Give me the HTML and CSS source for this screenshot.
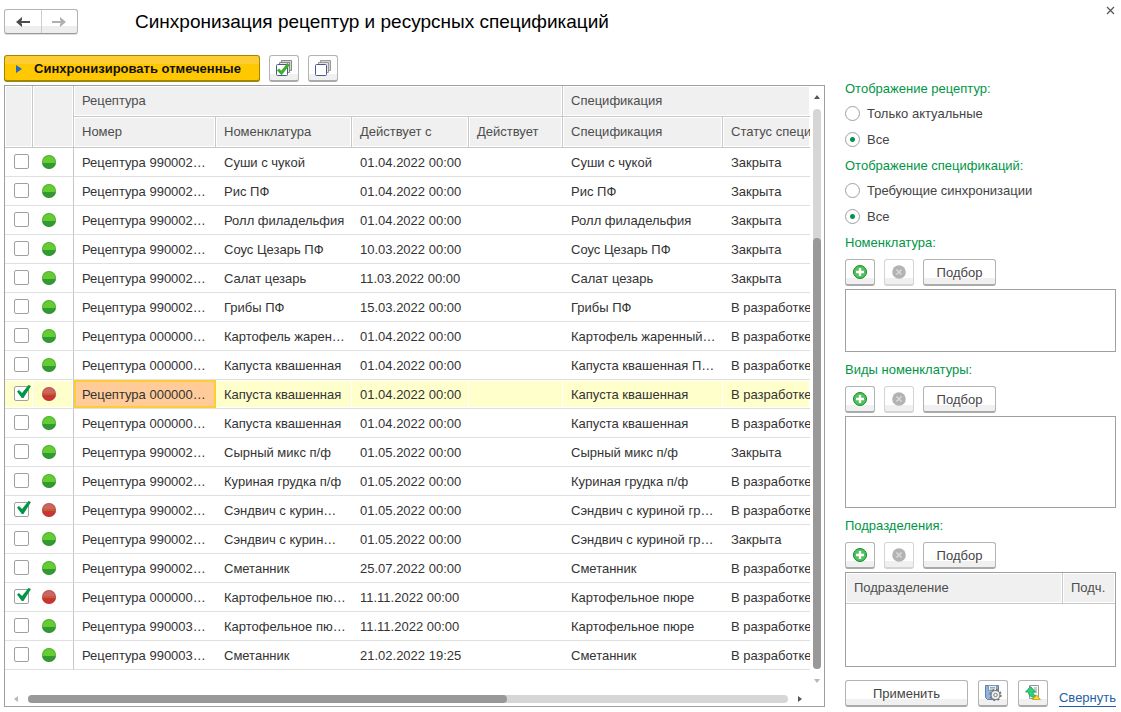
FILE: index.html
```html
<!DOCTYPE html>
<html lang="ru">
<head>
<meta charset="utf-8">
<title>Синхронизация рецептур и ресурсных спецификаций</title>
<link rel="stylesheet" href="styles.css">
</head>
<body>
<svg class="defs" aria-hidden="true">
  <symbol id="plus" viewBox="0 0 16 16"><circle cx="8" cy="8" r="6.5" fill="#4fc25a" stroke="#16892b"/><path d="M8 4v8M4 8h8" stroke="#fff" stroke-width="2.4"/></symbol>
  <symbol id="cross" viewBox="0 0 16 16"><circle cx="8" cy="8" r="6.8" fill="#b3b3b3"/><path d="M5.5 5.5l5 5M10.500 5.500l-5 5" stroke="#d8d8d8" stroke-width="1.6"/></symbol>
</svg>
<header class="titlebar">
  <nav class="history">
    <button class="history-btn" aria-label="Назад"><svg width="16" height="12" viewBox="0 0 16 12"><path d="M2 6h13" stroke="#4d4d4d" stroke-width="2"/><path d="M1 6l6-5v3L5 6l2 2v3z" fill="#4d4d4d"/></svg></button>
    <button class="history-btn" aria-label="Вперед"><svg width="16" height="12" viewBox="0 0 16 12"><path d="M1 6h13" stroke="#b0b0b0" stroke-width="2"/><path d="M15 6L9 1v3l2 2-2 2v3z" fill="#b0b0b0"/></svg></button>
  </nav>
  <h1 class="title">Синхронизация рецептур и ресурсных спецификаций</h1>
  <button class="close" aria-label="Закрыть"><svg width="9" height="9" viewBox="0 0 9 9"><path d="M1 1l7 7M8 1L1 8" stroke="#555" stroke-width="1.200"/></svg></button>
</header>
<div class="layout">
  <main class="content">
    <div class="toolbar">
      <button class="btn btn-primary"><svg width="6" height="8" viewBox="0 0 6 8"><path d="M0 0l6 4-6 4z" fill="#2a66c8"/></svg>Синхронизировать отмеченные</button>
      <button class="btn btn-icon" aria-label="Отметить все"><svg width="16" height="16" viewBox="0 0 16 16"><path d="M5.500 3V.5h10v10H13" fill="#d4d4d4" stroke="#888"/><path d="M3.500 5V2.500h10v10H11" fill="#e4e4e4" stroke="#888"/><rect x=".5" y="4.500" width="11" height="11" rx="1" fill="#fff" stroke="#4b5590"/><path d="M2 9.500l3.500 3.500 7-9" fill="none" stroke="#3fae2a" stroke-width="3"/></svg></button>
      <button class="btn btn-icon" aria-label="Снять отметки"><svg width="16" height="16" viewBox="0 0 16 16"><path d="M5.500 3V.5h10v10H13" fill="#d4d4d4" stroke="#999"/><path d="M3.500 5V2.500h10v10H11" fill="#e4e4e4" stroke="#999"/><rect x=".5" y="4.500" width="11" height="11" rx="1" fill="#fff" stroke="#4b5590"/></svg></button>
    </div>
    <div class="frame">
      <div class="viewport">
        <table class="grid">
          <colgroup><col class="c-check"><col class="c-state"><col class="c-num"><col class="c-item"><col class="c-from"><col class="c-to"><col class="c-spec"><col></colgroup>
          <thead>
            <tr><th rowspan="2"></th><th rowspan="2"></th><th colspan="4">Рецептура</th><th colspan="2">Спецификация</th></tr>
            <tr><th>Номер</th><th>Номенклатура</th><th>Действует с</th><th>Действует</th><th>Спецификация</th><th>Статус специ</th></tr>
          </thead>
          <tbody>
            <tr><td><input type="checkbox" class="check" aria-label="Суши с чукой"></td><td><span class="dot"></span></td><td>Рецептура 990002…</td><td>Суши с чукой</td><td>01.04.2022 00:00</td><td></td><td>Суши с чукой</td><td>Закрыта</td></tr>
            <tr><td><input type="checkbox" class="check" aria-label="Рис ПФ"></td><td><span class="dot"></span></td><td>Рецептура 990002…</td><td>Рис ПФ</td><td>01.04.2022 00:00</td><td></td><td>Рис ПФ</td><td>Закрыта</td></tr>
            <tr><td><input type="checkbox" class="check" aria-label="Ролл филадельфия"></td><td><span class="dot"></span></td><td>Рецептура 990002…</td><td>Ролл филадельфия</td><td>01.04.2022 00:00</td><td></td><td>Ролл филадельфия</td><td>Закрыта</td></tr>
            <tr><td><input type="checkbox" class="check" aria-label="Соус Цезарь ПФ"></td><td><span class="dot"></span></td><td>Рецептура 990002…</td><td>Соус Цезарь ПФ</td><td>10.03.2022 00:00</td><td></td><td>Соус Цезарь ПФ</td><td>Закрыта</td></tr>
            <tr><td><input type="checkbox" class="check" aria-label="Салат цезарь"></td><td><span class="dot"></span></td><td>Рецептура 990002…</td><td>Салат цезарь</td><td>11.03.2022 00:00</td><td></td><td>Салат цезарь</td><td>Закрыта</td></tr>
            <tr><td><input type="checkbox" class="check" aria-label="Грибы ПФ"></td><td><span class="dot"></span></td><td>Рецептура 990002…</td><td>Грибы ПФ</td><td>15.03.2022 00:00</td><td></td><td>Грибы ПФ</td><td>В разработке</td></tr>
            <tr><td><input type="checkbox" class="check" aria-label="Картофель жаренный"></td><td><span class="dot"></span></td><td>Рецептура 000000…</td><td>Картофель жарен…</td><td>01.04.2022 00:00</td><td></td><td>Картофель жаренный…</td><td>В разработке</td></tr>
            <tr><td><input type="checkbox" class="check" aria-label="Капуста квашенная"></td><td><span class="dot"></span></td><td>Рецептура 000000…</td><td>Капуста квашенная</td><td>01.04.2022 00:00</td><td></td><td>Капуста квашенная П…</td><td>В разработке</td></tr>
            <tr class="selected"><td><input type="checkbox" class="check" aria-label="Капуста квашенная" checked></td><td><span class="dot dot-red"></span></td><td class="current">Рецептура 000000…</td><td>Капуста квашенная</td><td>01.04.2022 00:00</td><td></td><td>Капуста квашенная</td><td>В разработке</td></tr>
            <tr><td><input type="checkbox" class="check" aria-label="Капуста квашенная"></td><td><span class="dot"></span></td><td>Рецептура 000000…</td><td>Капуста квашенная</td><td>01.04.2022 00:00</td><td></td><td>Капуста квашенная</td><td>В разработке</td></tr>
            <tr><td><input type="checkbox" class="check" aria-label="Сырный микс п/ф"></td><td><span class="dot"></span></td><td>Рецептура 990002…</td><td>Сырный микс п/ф</td><td>01.05.2022 00:00</td><td></td><td>Сырный микс п/ф</td><td>Закрыта</td></tr>
            <tr><td><input type="checkbox" class="check" aria-label="Куриная грудка п/ф"></td><td><span class="dot"></span></td><td>Рецептура 990002…</td><td>Куриная грудка п/ф</td><td>01.05.2022 00:00</td><td></td><td>Куриная грудка п/ф</td><td>В разработке</td></tr>
            <tr><td><input type="checkbox" class="check" aria-label="Сэндвич с куриной грудкой" checked></td><td><span class="dot dot-red"></span></td><td>Рецептура 990002…</td><td>Сэндвич с курин…</td><td>01.05.2022 00:00</td><td></td><td>Сэндвич с куриной гр…</td><td>В разработке</td></tr>
            <tr><td><input type="checkbox" class="check" aria-label="Сэндвич с куриной грудкой"></td><td><span class="dot"></span></td><td>Рецептура 990002…</td><td>Сэндвич с курин…</td><td>01.05.2022 00:00</td><td></td><td>Сэндвич с куриной гр…</td><td>Закрыта</td></tr>
            <tr><td><input type="checkbox" class="check" aria-label="Сметанник"></td><td><span class="dot"></span></td><td>Рецептура 990002…</td><td>Сметанник</td><td>25.07.2022 00:00</td><td></td><td>Сметанник</td><td>В разработке</td></tr>
            <tr><td><input type="checkbox" class="check" aria-label="Картофельное пюре" checked></td><td><span class="dot dot-red"></span></td><td>Рецептура 000000…</td><td>Картофельное пю…</td><td>11.11.2022 00:00</td><td></td><td>Картофельное пюре</td><td>В разработке</td></tr>
            <tr><td><input type="checkbox" class="check" aria-label="Картофельное пюре"></td><td><span class="dot"></span></td><td>Рецептура 990003…</td><td>Картофельное пю…</td><td>11.11.2022 00:00</td><td></td><td>Картофельное пюре</td><td>В разработке</td></tr>
            <tr><td><input type="checkbox" class="check" aria-label="Сметанник"></td><td><span class="dot"></span></td><td>Рецептура 990003…</td><td>Сметанник</td><td>21.02.2022 19:25</td><td></td><td>Сметанник</td><td>В разработке</td></tr>
          </tbody>
        </table>
      </div>
      <div class="vbar">
        <svg class="arrow" width="6" height="4" viewBox="0 0 6 4"><path d="M3 0l3 4H0z" fill="#555"/></svg>
        <div class="track"><div class="thumb"></div></div>
        <svg class="arrow" width="6" height="4" viewBox="0 0 6 4"><path d="M3 4l3-4H0z" fill="#b8b8b8"/></svg>
      </div>
      <div class="hbar">
        <svg class="arrow" width="4" height="6" viewBox="0 0 4 6"><path d="M0 3l4-3v6z" fill="#b8b8b8"/></svg>
        <div class="track"><div class="thumb"></div></div>
        <svg class="arrow" width="4" height="6" viewBox="0 0 4 6"><path d="M4 3L0 0v6z" fill="#555"/></svg>
      </div>
    </div>
  </main>
  <aside class="side">
    <fieldset class="group">
      <legend class="caption">Отображение рецептур:</legend>
      <label class="option"><input type="radio" class="radio" name="recipes">Только актуальные</label>
      <label class="option"><input type="radio" class="radio" name="recipes" checked>Все</label>
    </fieldset>
    <fieldset class="group">
      <legend class="caption">Отображение спецификаций:</legend>
      <label class="option"><input type="radio" class="radio" name="specs">Требующие синхронизации</label>
      <label class="option"><input type="radio" class="radio" name="specs" checked>Все</label>
    </fieldset>
    <section class="filter">
      <label class="caption" for="items">Номенклатура:</label>
      <div class="actions">
        <button class="btn btn-icon" aria-label="Добавить"><svg width="16" height="16"><use href="#plus"/></svg></button>
        <button class="btn btn-icon" aria-label="Удалить" disabled><svg width="16" height="16"><use href="#cross"/></svg></button>
        <button class="btn btn-pick">Подбор</button>
      </div>
      <textarea class="list" id="items"></textarea>
    </section>
    <section class="filter">
      <label class="caption" for="kinds">Виды номенклатуры:</label>
      <div class="actions">
        <button class="btn btn-icon" aria-label="Добавить"><svg width="16" height="16"><use href="#plus"/></svg></button>
        <button class="btn btn-icon" aria-label="Удалить" disabled><svg width="16" height="16"><use href="#cross"/></svg></button>
        <button class="btn btn-pick">Подбор</button>
      </div>
      <textarea class="list list-tall" id="kinds"></textarea>
    </section>
    <section class="filter">
      <span class="caption" id="departments">Подразделения:</span>
      <div class="actions">
        <button class="btn btn-icon" aria-label="Добавить"><svg width="16" height="16"><use href="#plus"/></svg></button>
        <button class="btn btn-icon" aria-label="Удалить" disabled><svg width="16" height="16"><use href="#cross"/></svg></button>
        <button class="btn btn-pick">Подбор</button>
      </div>
      <div class="departments">
        <table class="grid" aria-labelledby="departments">
          <colgroup><col><col class="c-sub"></colgroup>
          <thead><tr><th>Подразделение</th><th>Подч.</th></tr></thead>
        </table>
      </div>
    </section>
    <footer class="footer">
      <button class="btn btn-apply">Применить</button>
      <button class="btn btn-icon" aria-label="Настройки"><svg width="18" height="16" viewBox="0 0 18 16"><path d="M1.500.5h13v14h-11l-2-2z" fill="#8fb4dc" stroke="#5b7fae"/><path d="M4.500.5h8v5h-8z" fill="#e8eef5" stroke="#8296b0"/><path d="M6 2.500h5M6 4h5" stroke="#9ab"/><circle cx="11.500" cy="10" r="4.500" fill="#eee" stroke="#777" stroke-width="1.200"/><circle cx="11.500" cy="10" r="5.400" fill="none" stroke="#777" stroke-width="1.600" stroke-dasharray="2 2.240"/><circle cx="11.500" cy="10" r="3.600" fill="#eee"/><circle cx="11.500" cy="10" r="1.700" fill="#fff" stroke="#777"/></svg></button>
      <button class="btn btn-icon" aria-label="Загрузить настройки"><svg width="16" height="16" viewBox="0 0 16 16"><path d="M4.500.5h9v13h-9z" fill="#fafafa" stroke="#999"/><path d="M9 3h3M9 5h3M9 7h3" stroke="#999"/><path d="M5.500 1.500L10.500 7H8c0 2 .5 3 3 3.500v2C6 12.500 3.500 10.500 3.500 7H.5z" fill="#2fd27a" stroke="#129a4c" stroke-width=".8"/><path d="M11.500 10l4 4.500h-8z" fill="#ffd92b" stroke="#c79b00" stroke-width=".8"/></svg></button>
      <a class="collapse" href="#">Свернуть</a>
    </footer>
  </aside>
</div>
</body>
</html>
```
FILE: styles.css
```css
* { box-sizing: border-box; }
body {
  margin: 0;
  min-height: 100vh;
  display: flex;
  flex-direction: column;
  padding: 0 5px 5px 4px;
  background: #fff;
  color: #333;
  font: 13px/16px "Liberation Sans", Arial, sans-serif;
}
button, textarea { font: inherit; color: inherit; }
.defs { position: absolute; width: 0; height: 0; }

.titlebar { display: flex; align-items: flex-start; height: 55px; padding-top: 9px; }
.history {
  display: flex;
  width: 74px;
  height: 25px;
  border: 1px solid #b4b4b4;
  border-bottom-color: #999;
  border-radius: 3px;
  background: linear-gradient(#fff 70%, #eee 70%);
  box-shadow: 0 1px 0 #ddd;
}
.history-btn {
  flex: 1;
  display: flex;
  align-items: center;
  justify-content: center;
  padding: 0;
  border: 0;
  background: none;
}
.history-btn + .history-btn { border-left: 1px solid #ccc; }
.title { flex: 1; margin: 0 0 0 57px; font-size: 19px; line-height: 26px; font-weight: 400; color: #000; }
.close { display: flex; padding: 0; margin: -3px 1px 0 0; border: 0; background: none; }

.layout { flex: 1; display: grid; grid-template-columns: minmax(0, 1fr) 271px; gap: 20px; }
.content { display: flex; flex-direction: column; gap: 3px; }
.toolbar { display: flex; gap: 9px; }

.btn {
  display: flex;
  align-items: center;
  justify-content: center;
  height: 27px;
  padding: 0;
  border: 1px solid #b4b4b4;
  border-bottom: 2px solid #aaa;
  border-radius: 3px;
  background: linear-gradient(#fff 75%, #f0f0f0 75%);
  color: #444;
}
.btn-icon { width: 30px; }
.btn-pick { width: 73px; padding-top: 2px; }
.btn-apply { width: 123px; padding-top: 2px; }
.btn:disabled { border-color: #d4d4d4; }
.btn-primary {
  gap: 12px;
  padding: 1px 18px 0 11px;
  border: 1px solid #a08600;
  border-bottom-width: 2px;
  background: linear-gradient(#ffcc33 33%, #ffc800 33%);
  color: #111;
  font-weight: 700;
}

.frame {
  flex: 1;
  display: grid;
  grid-template-columns: minmax(0, 1fr) 14px;
  grid-template-rows: 1fr 15px;
  border: 1px solid #a0a0a0;
}
.viewport { overflow: hidden; }
.grid { width: 100%; table-layout: fixed; border-collapse: separate; border-spacing: 0; }
.c-check { width: 28px; }
.c-state { width: 41px; }
.c-num { width: 142px; }
.c-item { width: 136px; }
.c-from { width: 117px; }
.c-to { width: 94px; }
.c-spec { width: 160px; }
.c-sub { width: 52px; }
.grid th {
  height: 31px;
  padding: 0 0 0 8px;
  border-right: 1px solid #c8c8c8;
  border-bottom: 1px solid #c8c8c8;
  background: #f0f0f0;
  box-shadow: inset 0 0 0 1px #fff;
  color: #4d4d4d;
  font-weight: 400;
  text-align: left;
  white-space: nowrap;
  overflow: hidden;
}
.grid th:last-child { border-right: 0; }
.grid td {
  height: 29px;
  padding: 2px 0 0 8px;
  border-bottom: 1px solid #e0e0e0;
  white-space: nowrap;
  overflow: hidden;
}
.grid td:nth-child(-n+2) { padding-top: 0; }
.grid td:nth-child(2) { border-right: 1px solid #c8c8c8; }
.grid .selected td { background: #ffffcc; box-shadow: inset -1px -1px #fff, inset 0 1px #fff; }
.grid .selected .current { background: #ffcc99; box-shadow: inset 0 0 0 2px #ffcc33; }

.check {
  appearance: none;
  position: relative;
  display: block;
  width: 15px;
  height: 15px;
  margin: 0 0 1px 1px;
  border: 1px solid #a0a0a0;
  border-radius: 2px;
  background: #fff;
}
.check:checked::after {
  content: "";
  position: absolute;
  left: 2px;
  top: -2px;
  width: 14px;
  height: 13px;
  background: #009646;
  clip-path: polygon(0 50%, 14% 38%, 36% 62%, 82% 0, 100% 8%, 46% 100%, 34% 100%);
}
.dot {
  display: block;
  width: 14px;
  height: 14px;
  margin-left: 1px;
  border-radius: 50%;
  background: linear-gradient(#66cc33 60%, #339933 60%);
  box-shadow: inset 0 0 0 1px rgba(40, 140, 40, .4);
}
.dot-red {
  background: linear-gradient(#cc6666 45%, #c0602f 45%, #c0602f 60%, #cc3333 60%);
  box-shadow: inset 0 0 0 1px rgba(170, 60, 50, .4);
}

.vbar, .hbar { display: flex; align-items: center; }
.vbar { flex-direction: column; gap: 10px; padding: 9px 0 8px; }
.hbar { gap: 10px; padding: 0 8px 0 9px; }
.arrow { flex: none; }
.track { flex: 1; border-radius: 4px; background: #d6d6d6; }
.thumb { border-radius: 4px; background: #999; }
.vbar .track { width: 8px; display: flex; align-items: flex-end; }
.vbar .thumb { width: 8px; height: 77%; }
.hbar .track { height: 8px; }
.hbar .thumb { width: 63%; height: 8px; }

.side { padding-top: 21px; }
.group { margin: 0; padding: 0; border: 0; }
.caption { display: block; padding: 0; line-height: 25px; color: #009646; }
.option { display: flex; align-items: center; gap: 6px; height: 26px; color: #444; }
.radio {
  appearance: none;
  width: 15px;
  height: 15px;
  margin: 0 1px 1px 0;
  border: 1px solid #a0a0a0;
  border-radius: 50%;
  background: #fff;
}
.radio:checked { background: radial-gradient(circle, #009646 2px, #fff 3px); }
.filter + .filter { margin-top: 5px; }
.actions { display: flex; gap: 9px; margin: 4px 0 3px; }
.list { display: block; width: 100%; height: 63px; border: 1px solid #a0a0a0; resize: none; }
.list-tall { height: 92px; }
.departments { height: 95px; border: 1px solid #a0a0a0; }
.footer { display: flex; align-items: flex-end; gap: 10px; margin-top: 13px; }
.collapse { margin-left: auto; color: #1f5fa8; text-decoration: none; border-bottom: 1px solid #1f5fa8; }
```
